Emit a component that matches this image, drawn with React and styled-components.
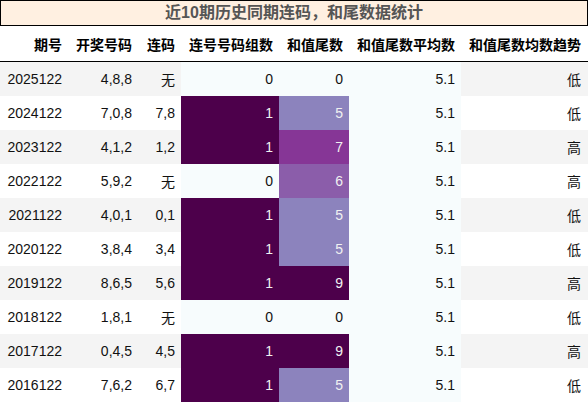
import React from 'react';
import styled, { createGlobalStyle } from 'styled-components';

const GlobalStyle = createGlobalStyle`
  html, body {
    margin: 0;
    padding: 0;
    background: #fff;
  }
  body {
    font-family: 'Liberation Sans', 'Noto Sans CJK SC', sans-serif;
  }
`;

// BuPu colour scale, same as a pandas background_gradient
const BUPU = ['#f7fcfd', '#e0ecf4', '#bfd3e6', '#9ebcda', '#8c96c6', '#8c6bb1', '#88419d', '#810f7c', '#4d004b'];

const hexToRgb = (h) => [1, 3, 5].map((i) => parseInt(h.slice(i, i + 2), 16));

const bupu = (t) => {
  const p = Math.max(0, Math.min(1, t)) * (BUPU.length - 1);
  const i = Math.min(Math.floor(p), BUPU.length - 2);
  const f = p - i;
  const a = hexToRgb(BUPU[i]);
  const b = hexToRgb(BUPU[i + 1]);
  const c = a.map((v, k) => Math.round(v + (b[k] - v) * f));
  return { bg: `rgb(${c.join(',')})`, dark: t > 0.4 };
};

const rows = [
  ['2025122', '4,8,8', '无', 0, 0, '5.1', '低'],
  ['2024122', '7,0,8', '7,8', 1, 5, '5.1', '低'],
  ['2023122', '4,1,2', '1,2', 1, 7, '5.1', '高'],
  ['2022122', '5,9,2', '无', 0, 6, '5.1', '高'],
  ['2021122', '4,0,1', '0,1', 1, 5, '5.1', '低'],
  ['2020122', '3,8,4', '3,4', 1, 5, '5.1', '低'],
  ['2019122', '8,6,5', '5,6', 1, 9, '5.1', '高'],
  ['2018122', '1,8,1', '无', 0, 0, '5.1', '低'],
  ['2017122', '0,4,5', '4,5', 1, 9, '5.1', '高'],
  ['2016122', '7,6,2', '6,7', 1, 5, '5.1', '低'],
];

const headers = ['期号', '开奖号码', '连码', '连号号码组数', '和值尾数', '和值尾数平均数', '和值尾数均数趋势'];
const widths = [68, 70, 43, 98, 70, 112, 127];

const Wrap = styled.div`
  width: 588px;
`;

const Title = styled.div`
  height: 24px;
  border: 1px solid #000;
  background: #fff0e1;
  color: #555;
  font-size: 16px;
  font-weight: bold;
  line-height: 24px;
  text-align: center;
`;

const Table = styled.table`
  border-collapse: collapse;
  table-layout: fixed;
  width: 588px;
  font-size: 14px;
  color: #111;
`;

const Th = styled.th`
  height: 35px;
  padding: 0 6px 0 0;
  text-align: right;
  font-weight: bold;
  border-bottom: 1px solid #000;
  color: #000;
  &:last-child {
    padding-right: 7px;
  }
`;

const Td = styled.td`
  height: 34px;
  padding: 0 6px 0 0;
  text-align: right;
  background: ${({ $bg }) => $bg || 'transparent'};
  color: ${({ $dark }) => ($dark ? '#f1f1f1' : '#111')};
  &:last-child {
    padding-right: 7px;
  }
`;

const Tr = styled.tr`
  background: ${({ $odd }) => ($odd ? '#f4f4f4' : '#fff')};
`;

export default function App() {
  return (
    <Wrap>
      <GlobalStyle />
      <Title>近10期历史同期连码，和尾数据统计</Title>
      <Table>
        <colgroup>
          {widths.map((w, i) => (
            <col key={i} style={{ width: w }} />
          ))}
        </colgroup>
        <thead>
          <tr>
            {headers.map((h) => (
              <Th key={h}>{h}</Th>
            ))}
          </tr>
        </thead>
        <tbody>
          {rows.map((r, i) => {
            const g = bupu(r[3]);
            const t = bupu(r[4] / 9);
            const avg = bupu(0);
            return (
              <Tr key={r[0]} $odd={i % 2 === 0}>
                <Td>{r[0]}</Td>
                <Td>{r[1]}</Td>
                <Td>{r[2]}</Td>
                <Td $bg={g.bg} $dark={g.dark}>{r[3]}</Td>
                <Td $bg={t.bg} $dark={t.dark}>{r[4]}</Td>
                <Td $bg={avg.bg}>{r[5]}</Td>
                <Td>{r[6]}</Td>
              </Tr>
            );
          })}
        </tbody>
      </Table>
    </Wrap>
  );
}
